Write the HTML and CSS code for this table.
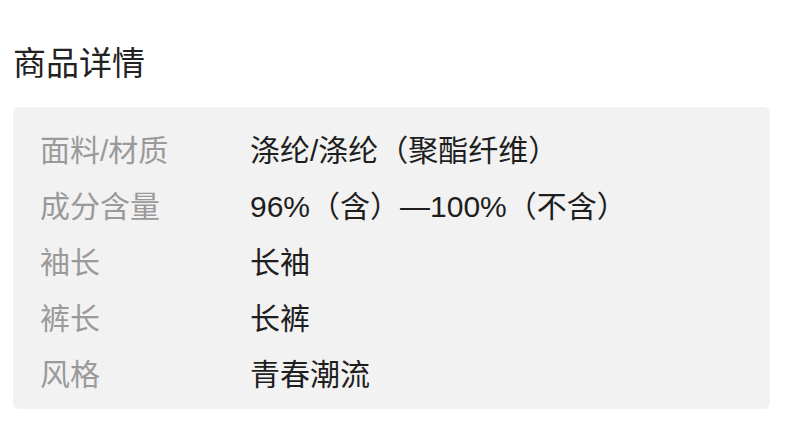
FILE: index.html
```html
<!DOCTYPE html>
<html lang="zh-CN">
<head>
<meta charset="utf-8">
<link rel="stylesheet" href="styles.css">
</head>
<body>
<div class="page">
  <h2 class="title">商品详情</h2>
  <div class="card">
    <div class="row"><span class="label">面料/材质</span><span class="value">涤纶/涤纶（聚酯纤维）</span></div>
    <div class="row"><span class="label">成分含量</span><span class="value">96%（含）—100%（不含）</span></div>
    <div class="row"><span class="label">袖长</span><span class="value">长袖</span></div>
    <div class="row"><span class="label">裤长</span><span class="value">长裤</span></div>
    <div class="row"><span class="label">风格</span><span class="value">青春潮流</span></div>
  </div>
</div>
</body>
</html>
```

FILE: styles.css
```css
html, body {
  margin: 0;
  padding: 0;
  background: #ffffff;
}
body {
  font-family: "Liberation Sans", "Noto Sans CJK SC", sans-serif;
}
.page {
  padding: 45px 20px 0 13px;
}
.title {
  margin: 0;
  font-size: 33px;
  font-weight: normal;
  line-height: 38px;
  color: #222;
}
.card {
  margin-top: 24px;
  background: #f2f2f2;
  border-radius: 6px;
  padding: 13px 0 9px 27px;
}
.row {
  display: flex;
  height: 56px;
  align-items: center;
  font-size: 30px;
}
.label {
  width: 210px;
  flex: none;
  color: #9a9a9a;
}
.value {
  color: #1e1e1e;
}
```
